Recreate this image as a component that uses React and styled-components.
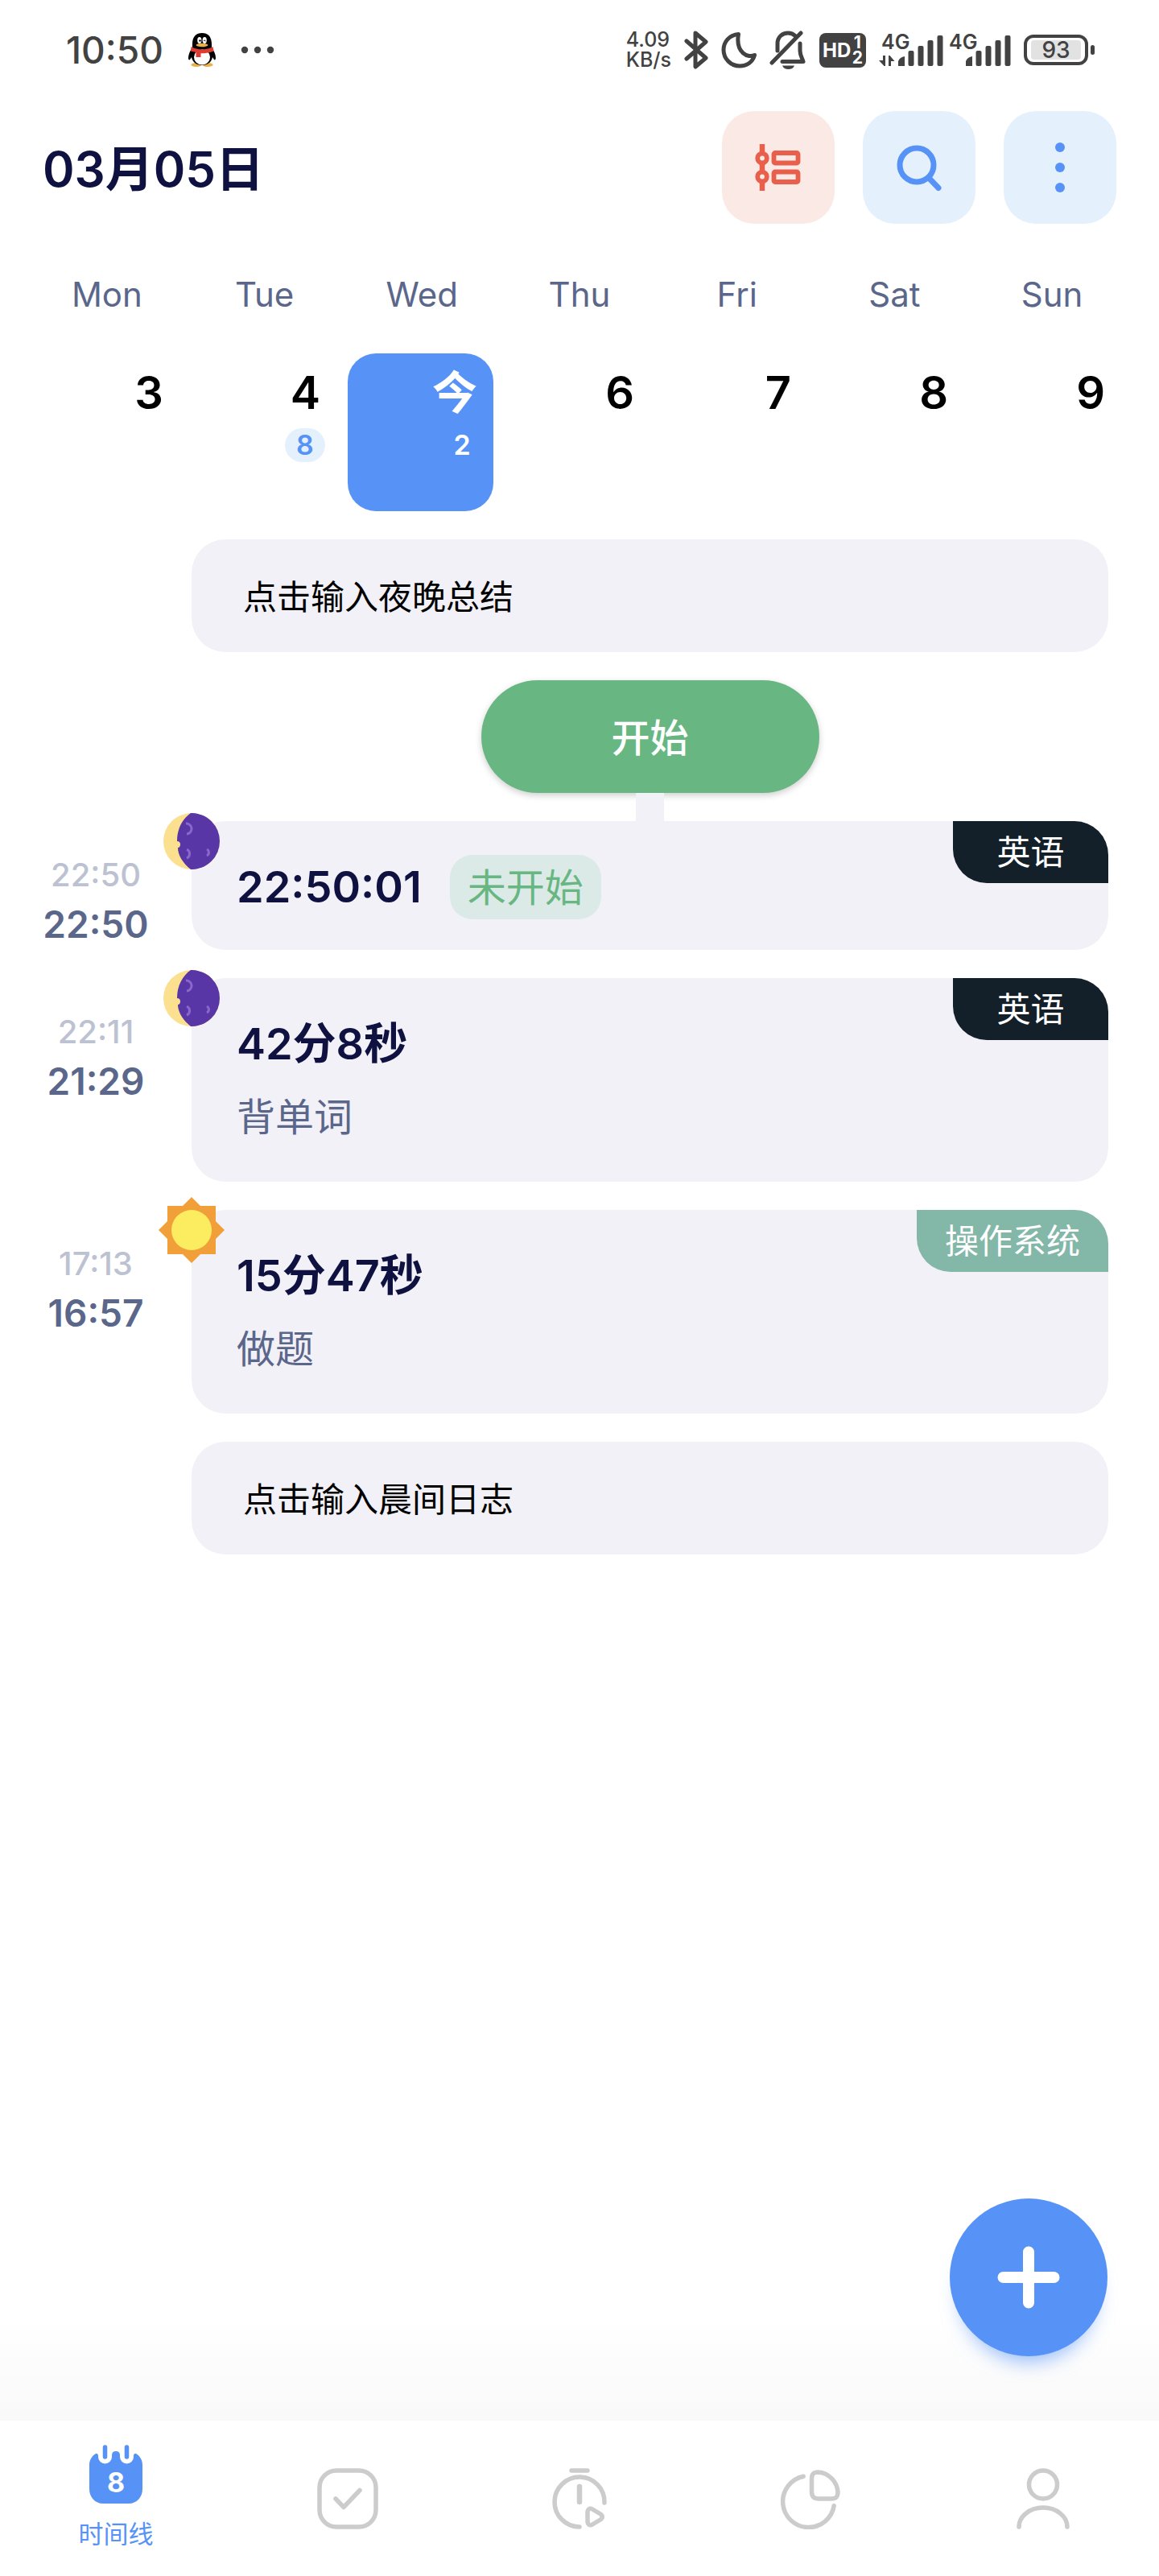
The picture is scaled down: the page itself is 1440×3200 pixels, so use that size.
import React from "react";
import styled, { createGlobalStyle, css } from "styled-components";

const c = {
  blue: "#5793f6",
  blueSoft: "#e5f0fd",
  red: "#e8604c",
  redSoft: "#fbe9e5",
  green: "#68b782",
  greenSoft: "#dceae7",
  card: "#f2f1f7",
  ink: "#0f1140",
  slate: "#5b668b",
  mist: "#bcc2d1",
  status: "#424242",
  idle: "#cccccc",
};

const GlobalStyle = createGlobalStyle`
  *, *::before, *::after { box-sizing: border-box; }
  html { background: #fff; }
  body {
    margin: 0;
    font-family: Inter, "Noto Sans CJK SC", sans-serif;
    color: ${c.ink};
  }
  button { font: inherit; color: inherit; border: 0; padding: 0; background: none; cursor: pointer; }
  a { color: inherit; text-decoration: none; }
  h1, h2, p, ul, ol { margin: 0; padding: 0; font-weight: inherit; }
  ul, ol { list-style: none; }
  svg { display: block; flex: none; }
`;

const Screen = styled.div`
  min-height: 100vh;
  display: flex;
  flex-direction: column;
`;

/* Status bar */
const StatusBar = styled.div`
  height: 124px;
  padding: 0 80px 0 82px;
  display: flex;
  align-items: center;
  justify-content: space-between;
  color: ${c.status};
  font-weight: 500;
`;
const StatusGroup = styled.div`
  display: flex;
  align-items: center;
  gap: ${(p) => p.$gap}px;
`;
const Clock = styled.time`
  font-size: 46px;
  line-height: 56px;
`;
const Speed = styled.div`
  font-size: 25px;
  line-height: 25px;
`;
const HdBadge = styled.div`
  width: 58px;
  height: 43px;
  border-radius: 8px;
  padding: 0 4px;
  display: flex;
  align-items: center;
  justify-content: space-between;
  background: ${c.status};
  color: #fff;
  font-size: 24px;
  line-height: 43px;
  font-weight: 700;
`;
const HdStack = styled.span`
  display: grid;
  justify-items: center;
  font-size: 21px;
  line-height: 19px;
`;
const Signal = styled.div`
  display: grid;
  grid-template-areas: "stack";
  width: 80px;
  height: 40px;
  > * { grid-area: stack; }
`;
const SignalLabel = styled.span`
  font-size: 25px;
  line-height: 20px;
  font-weight: 600;
  padding-left: 3px;
`;
const BatteryShell = styled.div`
  display: flex;
  align-items: center;
  gap: 3px;
  &::after {
    content: "";
    width: 5px;
    height: 12px;
    border-radius: 3px;
    background: ${c.status};
  }
`;
const BatteryBody = styled.div`
  width: 80px;
  height: 38px;
  border: 4px solid ${c.status};
  border-radius: 12px;
  padding: 3px 5px;
`;
const BatteryLevel = styled.div`
  height: 24px;
  border-radius: 4px;
  background: #e2e2e2;
  font-size: 28px;
  line-height: 24px;
  text-align: center;
`;

/* Header */
const Header = styled.header`
  padding: 14px 53px 0;
  display: flex;
  align-items: center;
  justify-content: space-between;
`;
const DateTitle = styled.h1`
  padding-top: 3px;
  font-size: 60px;
  line-height: 80px;
  font-weight: 600;
`;
const Toolbar = styled.div`
  display: flex;
  gap: 35px;
`;
const ToolButton = styled.button`
  width: 140px;
  height: 140px;
  border-radius: 40px;
  display: grid;
  place-items: center;
  background: ${(p) => (p.$tone === "red" ? c.redSoft : c.blueSoft)};
`;

/* Week strip */
const WeekNames = styled.ol`
  padding: 60px 35px 0;
  display: grid;
  grid-template-columns: repeat(7, 1fr);
`;
const WeekName = styled.li`
  font-size: 42px;
  line-height: 56px;
  text-align: center;
  color: ${c.slate};
`;
const WeekDays = styled.ol`
  padding: 45px 47px 0 42px;
  display: grid;
  grid-template-columns: repeat(7, 1fr);
  gap: 14px;
`;
const Day = styled.button`
  width: 100%;
  height: 196px;
  border-radius: 35px;
  padding: 17px 20px 0;
  display: flex;
  flex-direction: column;
  align-items: flex-end;
  gap: 12px;
  color: #000;
  ${(p) =>
    p.$active &&
    css`
      background: ${c.blue};
      color: #fff;
    `}
`;
const DayNumber = styled.span`
  font-size: 56px;
  line-height: 64px;
  font-weight: 600;
`;
const DayCount = styled.span`
  min-width: 50px;
  height: 42px;
  border-radius: 21px;
  margin-right: -6px;
  text-align: center;
  font-size: 34px;
  line-height: 42px;
  font-weight: 600;
  color: ${(p) => (p.$active ? "#fff" : c.blue)};
  background: ${(p) => (p.$active ? "transparent" : c.blueSoft)};
`;

/* Timeline */
const Main = styled.main`
  flex: 1;
  padding: 35px 63px 180px 0;
  background: linear-gradient(#ffffff, #f9f9f9) bottom / 100% 130px no-repeat;
`;
const Timeline = styled.ul`
  display: flex;
  flex-direction: column;
  gap: 35px;
`;
const Row = styled.li`
  display: grid;
  grid-template-columns: 238px 1fr;
  align-items: start;
`;
const Times = styled.div`
  padding-top: 37px;
  text-align: center;
  font-size: 40px;
  line-height: 60px;
  color: ${c.mist};
  font-weight: 500;
`;
const StartTime = styled.time`
  display: block;
  font-size: 46px;
  line-height: 62px;
  font-weight: 600;
  color: ${c.slate};
`;
const Slot = styled.div`
  grid-column: 2;
`;
const Note = styled.button`
  display: block;
  width: 100%;
  height: 140px;
  padding: 3px 64px 0;
  border-radius: 42px;
  background: ${c.card};
  color: #000;
  font-size: 42px;
  line-height: 60px;
  text-align: left;
`;
const StartSlot = styled(Slot)`
  display: grid;
  justify-items: center;
  position: relative;
`;
const StartButton = styled.button`
  width: 420px;
  height: 140px;
  padding-top: 3px;
  border-radius: 70px;
  background: ${c.green};
  color: #fff;
  font-size: 48px;
  line-height: 60px;
  font-weight: 500;
  box-shadow: 0 3px 8px rgba(0, 0, 0, 0.2);
`;
const Connector = styled.span`
  position: absolute;
  top: 100%;
  width: 35px;
  height: 36px;
  background: ${c.card};
`;
const Card = styled.article`
  position: relative;
  padding: 42px 56px 38px;
  border-radius: 42px;
  background: ${c.card};
`;
const CardHead = styled.div`
  display: flex;
  align-items: center;
  gap: 35px;
  height: 80px;
`;
const Duration = styled.h2`
  font-size: 54px;
  line-height: 80px;
  font-weight: 600;
`;
const State = styled.span`
  height: 80px;
  padding: 0 22px;
  border-radius: 28px;
  background: ${c.greenSoft};
  color: ${c.green};
  font-size: 48px;
  line-height: 82px;
`;
const Task = styled.p`
  padding: 15px 0 6px;
  font-size: 48px;
  line-height: 72px;
  color: ${c.slate};
`;
const Tag = styled.span`
  position: absolute;
  top: 0;
  right: 0;
  min-width: 193px;
  height: 77px;
  padding: 0 35px;
  border-radius: 0 42px;
  background: ${(p) => p.$color};
  color: #fff;
  font-size: 42px;
  line-height: 78px;
  text-align: center;
`;
const Marker = styled.span`
  position: absolute;
  top: -16px;
  left: -41px;
`;

/* Floating button and navigation */
const AddButton = styled.button`
  position: fixed;
  right: 64px;
  bottom: 273px;
  width: 196px;
  height: 196px;
  border-radius: 50%;
  display: grid;
  place-items: center;
  background: ${c.blue};
  box-shadow: 0 20px 24px -14px rgba(87, 147, 246, 0.65);
`;
const Nav = styled.nav`
  height: 193px;
  display: grid;
  grid-template-columns: repeat(5, 1fr);
  background: #fff;
`;
const NavLink = styled.a`
  display: flex;
  flex-direction: column;
  align-items: center;
  justify-content: center;
  gap: 15px;
  font-size: 31px;
  line-height: 44px;
  color: ${(p) => (p.$active ? c.blue : c.idle)};
`;
const CalendarGlyph = styled.span`
  display: grid;
  place-items: center;
  > * { grid-area: 1 / 1; }
`;
const CalendarNumber = styled.span`
  padding-top: 20px;
  font-size: 34px;
  line-height: 54px;
  font-weight: 700;
  color: #fff;
`;

const Penguin = () => (
  <svg width="46" height="46" viewBox="0 0 46 46" aria-hidden="true">
    <ellipse cx="16" cy="41.500" rx="6.500" ry="2.500" fill="#e9b04a" />
    <ellipse cx="30" cy="41.500" rx="6.500" ry="2.500" fill="#e9b04a" />
    <path d="M11 16C11 6 16 2 23 2s12 4 12 14v4c3 4 5 9 5 13 0 2-1 3-2 2l-2-3c-1 6-6 10-13 10s-12-4-13-10l-2 3c-1 1-2 0-2-2 0-4 2-9 5-13z" fill="#000" />
    <ellipse cx="23" cy="32" rx="10" ry="9.500" fill="#fff" />
    <path d="M9.500 19c8 4.500 19 4.500 27 0l1 5.500c-5 2-10 2.800-16 2.800V32h-6v-6l-6.500-1.500z" fill="#dd3c32" />
    <ellipse cx="19.800" cy="11" rx="2.600" ry="4" fill="#fff" />
    <ellipse cx="26.200" cy="11" rx="2.600" ry="4" fill="#fff" />
    <circle cx="20.500" cy="11.500" r="1.200" fill="#000" />
    <path d="M25 12q1.200-2 2.600 0" stroke="#000" strokeWidth="1" fill="none" />
    <ellipse cx="23" cy="17" rx="7.500" ry="2.200" fill="#e9b04a" />
  </svg>
);

const MoreDots = () => (
  <svg width="42" height="10" viewBox="0 0 42 10" fill="currentColor" aria-hidden="true">
    <circle cx="5" cy="5" r="4.200" />
    <circle cx="21" cy="5" r="4.200" />
    <circle cx="37" cy="5" r="4.200" />
  </svg>
);

const Bluetooth = () => (
  <svg width="30" height="50" viewBox="0 0 30 50" fill="none" stroke="currentColor" strokeWidth="5" strokeLinejoin="round" strokeLinecap="round" aria-hidden="true">
    <path d="M3 14l24 21-13 11V4l13 11L3 36" />
  </svg>
);

const Crescent = () => (
  <svg width="44" height="46" viewBox="0 0 44 46" fill="none" stroke="currentColor" strokeWidth="5" strokeLinejoin="round" aria-hidden="true">
    <path d="M21.500 3.500C10 4.500 3 13 3 23c0 11 9 20 20 20 9 0 16-5 18.500-13.500C34 33.500 17.500 27 21.500 3.500z" />
  </svg>
);

const MutedBell = () => (
  <svg width="46" height="50" viewBox="0 0 46 50" fill="none" stroke="currentColor" strokeWidth="5" strokeLinecap="round" strokeLinejoin="round" aria-hidden="true">
    <path d="M10 26V17C10 9 16 4 23 4c4 0 7 1.500 9 3.500M38 17v9c0 5 2 8 4 13.500H16" />
    <path d="M3 41L39 4" />
    <path d="M16 44.500h15c-1 3-4 4.500-7.500 4.500s-6.500-1.500-7.500-4.500z" fill="currentColor" stroke="none" />
  </svg>
);

const SignalBars = ({ data }) => (
  <svg width="80" height="40" viewBox="0 0 80 40" fill="currentColor" aria-hidden="true">
    {data && <path d="M5 27h3v13H6.500L0 33h5zM12 40V27h1.500l6 7H15v6z" />}
    <path d="M24 40v-6q2-5 8-6v12z" />
    <rect x="36.500" y="21" width="7" height="19" rx="2" />
    <rect x="48.500" y="15" width="7" height="25" rx="2" />
    <rect x="60.500" y="8" width="7" height="32" rx="2" />
    <rect x="72.500" y="2" width="7" height="38" rx="2" />
  </svg>
);

const TimelineIcon = () => (
  <svg width="58" height="58" viewBox="0 0 58 58" fill="none" stroke={c.red} aria-hidden="true">
    <path d="M9 0v10M9 25v8M9 48v10" strokeWidth="6.500" />
    <circle cx="9" cy="17.500" r="5.800" strokeWidth="5.800" />
    <circle cx="9" cy="40.500" r="5.800" strokeWidth="5.800" />
    <rect x="23.500" y="11" width="30" height="12.500" rx="1.500" strokeWidth="5.800" />
    <rect x="23.500" y="34.500" width="30" height="12.500" rx="1.500" strokeWidth="5.800" />
  </svg>
);

const SearchIcon = () => (
  <svg width="58" height="58" viewBox="0 0 58 58" fill="none" stroke={c.blue} strokeWidth="7" strokeLinecap="round" aria-hidden="true">
    <circle cx="26" cy="26" r="21" />
    <path d="M42 43l11 11.500" />
  </svg>
);

const VerticalDots = () => (
  <svg width="14" height="64" viewBox="0 0 14 64" fill={c.blue} aria-hidden="true">
    <circle cx="7" cy="7" r="6" />
    <circle cx="7" cy="32" r="6" />
    <circle cx="7" cy="57" r="6" />
  </svg>
);

const MoonMarker = () => (
  <svg width="82" height="82" viewBox="0 0 82 82" aria-hidden="true">
    <circle cx="41" cy="41" r="35" fill="#fae08f" />
    <path d="M40 6a35 35 0 0 1 0 70C30 68 24 58 24 49c2 0 3-2 3-4s-1-4-4-4C23 25 30 13 40 6z" fill="#5936a6" />
    <path d="M40 6h1a35 35 0 0 1 0 70h-1z" fill="#5936a6" />
    <path d="M34 19a6.500 6.500 0 0 1 1 13M35 51a6 6 0 0 1 0 11M60 51a4.500 4.500 0 0 1 0 8" fill="none" stroke="#8a67cd" strokeWidth="3" />
  </svg>
);

const SunMarker = () => (
  <svg width="82" height="82" viewBox="0 0 82 82" aria-hidden="true">
    <path d="M41 0l11 11h19v19l11 11-11 11v19H52L41 82 30 71H11V52L0 41l11-11V11h19z" fill="#f19f38" />
    <circle cx="41" cy="41" r="25" fill="#fcec60" />
  </svg>
);

const PlusIcon = () => (
  <svg width="78" height="78" viewBox="0 0 78 78" stroke="#fff" strokeWidth="14" strokeLinecap="round" aria-hidden="true">
    <path d="M39 7.500v63M7.500 39h63" />
  </svg>
);

const CalendarIcon = () => (
  <svg width="68" height="74" viewBox="0 0 68 74" aria-hidden="true">
    <path d="M9 11q2-1 3 2v2a8.500 8.500 0 0 0 17 0v-2q0-5 5-5t5 5v2a8.500 8.500 0 0 0 17 0v-2q1-3 3-2c5 3 8 8 8 14v30c0 10-7 18-17 18H18C8 73 1 65 1 55V25c0-6 3-11 8-14z" fill={c.blue} />
    <path d="M20.500 3v12M47.500 3v12" stroke={c.blue} strokeWidth="5.500" strokeLinecap="round" />
  </svg>
);

const outline = {
  width: 76,
  height: 76,
  viewBox: "0 0 76 76",
  fill: "none",
  stroke: "currentColor",
  strokeWidth: 5.5,
  strokeLinecap: "round",
  strokeLinejoin: "round",
  "aria-hidden": true,
};

const CheckIcon = () => (
  <svg {...outline}>
    <rect x="3" y="3" width="70" height="70" rx="21" />
    <path d="M23 38l10 10.500 20-21" />
  </svg>
);
const TimerIcon = () => (
  <svg {...outline}>
    <path d="M28 3h20M69 43A31 31 0 1 0 38 73" />
    <path d="M38 23v19" strokeWidth="6.500" />
    <path d="M48 55c0-4 3-6 6-4l10 6c3 2 3 5 0 7l-10 6c-3 2-6 0-6-4z" />
  </svg>
);
const PieIcon = () => (
  <svg {...outline}>
    <path d="M28.200 10.200A32 32 0 1 0 66.200 46.700" />
    <path d="M38.500 13c0-6 3-8 8-8C60 6 70 17 71 29.500c0 6-2 8.500-8 8.500H47.500c-6 0-9-2.500-9-8.500z" />
  </svg>
);
const PersonIcon = () => (
  <svg {...outline}>
    <circle cx="38" cy="20.500" r="17.500" />
    <path d="M8 73a30 24 0 0 1 60 0" />
  </svg>
);

const weekNames = ["Mon", "Tue", "Wed", "Thu", "Fri", "Sat", "Sun"];
const days = [
  { label: "3" },
  { label: "4", count: 8 },
  { label: "今", count: 2, active: true },
  { label: "6" },
  { label: "7" },
  { label: "8" },
  { label: "9" },
];
const entries = [
  { end: "22:50", start: "22:50", duration: "22:50:01", state: "未开始", tag: "英语", color: "#13202a", Icon: MoonMarker },
  { end: "22:11", start: "21:29", duration: "42分8秒", task: "背单词", tag: "英语", color: "#13202a", Icon: MoonMarker },
  { end: "17:13", start: "16:57", duration: "15分47秒", task: "做题", tag: "操作系统", color: "#83b7a8", Icon: SunMarker },
];
const tabs = [
  { id: "tasks", name: "任务", Icon: CheckIcon },
  { id: "timer", name: "计时", Icon: TimerIcon },
  { id: "stats", name: "统计", Icon: PieIcon },
  { id: "me", name: "我的", Icon: PersonIcon },
];

export default function App() {
  return (
    <Screen>
      <GlobalStyle />
      <StatusBar>
        <StatusGroup $gap={25}>
          <Clock>10:50</Clock>
          <Penguin />
          <MoreDots />
        </StatusGroup>
        <StatusGroup $gap={16}>
          <Speed>
            4.09
            <br />
            KB/s
          </Speed>
          <Bluetooth />
          <Crescent />
          <MutedBell />
          <HdBadge>
            HD
            <HdStack>
              <span>1</span>
              <span>2</span>
            </HdStack>
          </HdBadge>
          <StatusGroup $gap={4}>
            <Signal>
              <SignalLabel>4G</SignalLabel>
              <SignalBars data />
            </Signal>
            <Signal>
              <SignalLabel>4G</SignalLabel>
              <SignalBars />
            </Signal>
          </StatusGroup>
          <BatteryShell>
            <BatteryBody>
              <BatteryLevel>93</BatteryLevel>
            </BatteryBody>
          </BatteryShell>
        </StatusGroup>
      </StatusBar>

      <Header>
        <DateTitle>03月05日</DateTitle>
        <Toolbar>
          <ToolButton $tone="red" aria-label="时间线视图">
            <TimelineIcon />
          </ToolButton>
          <ToolButton aria-label="搜索">
            <SearchIcon />
          </ToolButton>
          <ToolButton aria-label="更多">
            <VerticalDots />
          </ToolButton>
        </Toolbar>
      </Header>

      <section>
        <WeekNames>
          {weekNames.map((name) => (
            <WeekName key={name}>{name}</WeekName>
          ))}
        </WeekNames>
        <WeekDays>
          {days.map((day) => (
            <li key={day.label}>
              <Day $active={day.active}>
                <DayNumber>{day.label}</DayNumber>
                {day.count && <DayCount $active={day.active}>{day.count}</DayCount>}
              </Day>
            </li>
          ))}
        </WeekDays>
      </section>

      <Main>
        <Timeline>
          <Row>
            <Slot>
              <Note>点击输入夜晚总结</Note>
            </Slot>
          </Row>
          <Row>
            <StartSlot>
              <StartButton>开始</StartButton>
              <Connector />
            </StartSlot>
          </Row>
          {entries.map(({ end, start, duration, state, task, tag, color, Icon }) => (
            <Row key={duration}>
              <Times>
                <time>{end}</time>
                <StartTime>{start}</StartTime>
              </Times>
              <Card>
                <CardHead>
                  <Duration>{duration}</Duration>
                  {state && <State>{state}</State>}
                </CardHead>
                {task && <Task>{task}</Task>}
                <Tag $color={color}>{tag}</Tag>
                <Marker>
                  <Icon />
                </Marker>
              </Card>
            </Row>
          ))}
          <Row>
            <Slot>
              <Note>点击输入晨间日志</Note>
            </Slot>
          </Row>
        </Timeline>
      </Main>

      <AddButton aria-label="添加">
        <PlusIcon />
      </AddButton>

      <Nav>
        <NavLink href="#timeline" $active>
          <CalendarGlyph>
            <CalendarIcon />
            <CalendarNumber>8</CalendarNumber>
          </CalendarGlyph>
          时间线
        </NavLink>
        {tabs.map(({ id, name, Icon }) => (
          <NavLink key={id} href={`#${id}`} aria-label={name}>
            <Icon />
          </NavLink>
        ))}
      </Nav>
    </Screen>
  );
}
